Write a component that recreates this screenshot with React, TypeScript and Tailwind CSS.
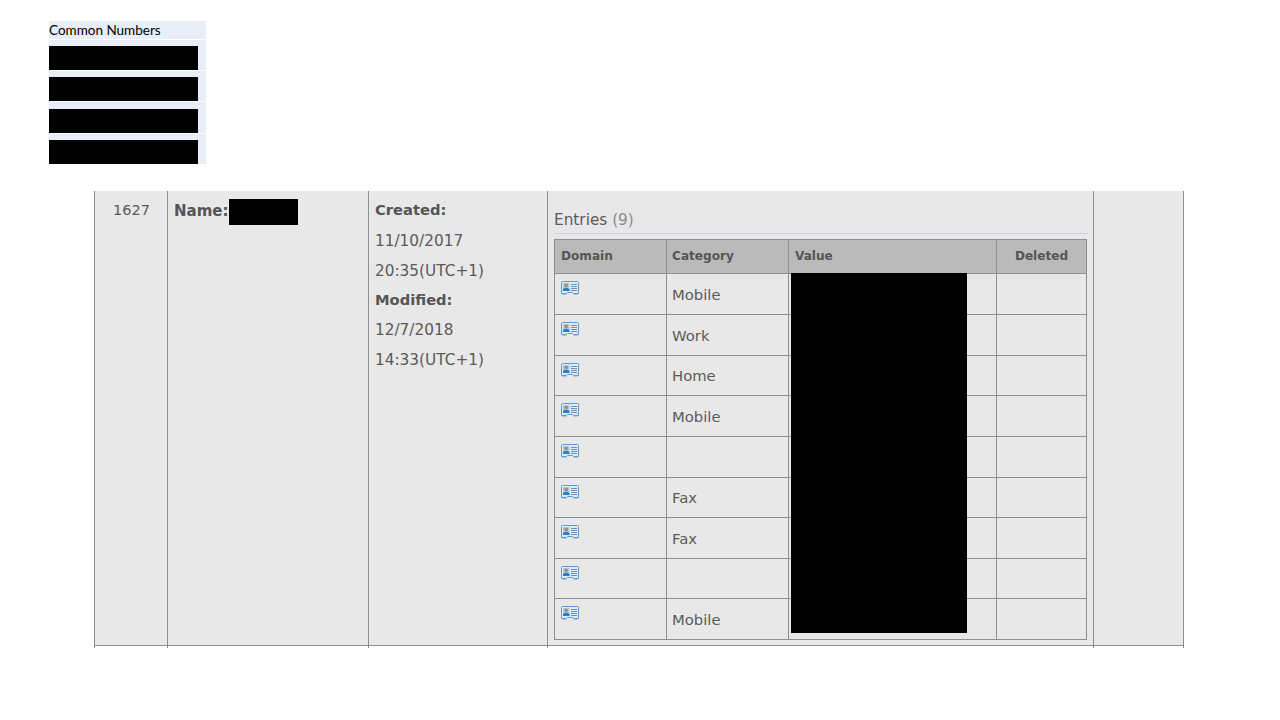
import React from "react";

function CardIcon() {
  return (
    <svg width="18" height="15" viewBox="0 0 18 15" className="block">
      <path d="M0.5 1.5 A1 1 0 0 1 1.5 .5 H16.5 A1 1 0 0 1 17.5 1.5 V12.5 H12.5 L11.5 11.5 H6.5 L5.5 12.5 H0.5 Z" fill="#dfecf8" stroke="#5b9bd5" />
      <rect x="2" y="2" width="6.5" height="8" fill="#a9cdea" />
      <circle cx="5.2" cy="4.3" r="1.9" fill="#c58450" />
      <path d="M2 10 V8 Q5.2 5.4 8.5 8 V10 Z" fill="#2f7cc0" />
      <path d="M10 3.5 H16 M10 5.5 H16 M10 7.5 H16 M10 9.5 H16" stroke="#6f8fae" strokeWidth="1" />
      <path d="M1.5 13.5 H5.5 M12.5 13.5 H16.5" stroke="#a9c3da" strokeWidth="1" />
    </svg>
  );
}

const entries = [
  { category: "Mobile", h: "h-[41px]" },
  { category: "Work", h: "h-[41px]" },
  { category: "Home", h: "h-[40px]" },
  { category: "Mobile", h: "h-[41px]" },
  { category: "", h: "h-[41px]" },
  { category: "Fax", h: "h-[40px]" },
  { category: "Fax", h: "h-[41px]" },
  { category: "", h: "h-[40px]" },
  { category: "Mobile", h: "h-[41px]" },
];

function Redacted({ tall }: { tall?: boolean }) {
  return (
    <div className={`mt-[1px] flex items-end bg-[#e9edf7] ${tall ? "h-[31px]" : "h-[30px]"}`}>
      <div className="h-6 w-[149px] bg-black" />
    </div>
  );
}

export default function App() {
  return (
    <div className="h-[720px] w-[1280px] overflow-hidden bg-white font-['DejaVu_Sans',sans-serif] text-[15.3px] text-[#5a5a5a]">
      <section className="ml-[49px] w-[157px] pt-[21px]">
        <div className="flex h-[18px] items-center bg-[#e9edf7] pt-[2px] font-['Lato',sans-serif] text-[13.5px] leading-none text-black">
          Common Numbers
        </div>
        <Redacted />
        <Redacted />
        <Redacted tall />
        <Redacted />
      </section>

      <section className="ml-[94px] mt-[27px] flex h-[457px] w-[1090px] items-start">
        <div className="h-full w-[73px] border-l border-[#8f8f8f]">
          <div className="h-[455px] border-b border-[#8f8f8f] bg-[#e8e8e8] pt-[10px] pl-[18px] text-[14.5px] leading-[19px]">1627</div>
        </div>
        <div className="h-full w-[201px] border-l border-[#8f8f8f]">
          <div className="flex h-[455px] items-start border-b border-[#8f8f8f] bg-[#e8e8e8] pt-[8px] pl-[6px]">
            <b className="mt-[3px] text-[15px] leading-[19px] text-[#555]">Name:</b>
            <span className="ml-[1px] h-[26px] w-[69px] bg-black" />
          </div>
        </div>
        <div className="h-full w-[179px] border-l border-[#8f8f8f]">
          <div className="h-[455px] border-b border-[#8f8f8f] bg-[#e8e8e8] pt-[7px] pl-[6px] leading-[29.8px]">
            <div className="text-[14.7px] leading-[24px] font-bold text-[#555]">Created:</div>
            <div className="mt-[4.8px]">11/10/2017</div>
            <div>20:35(UTC+1)</div>
            <div className="mt-[1.9px] text-[14.7px] leading-[24px] font-bold text-[#555]">Modified:</div>
            <div className="mt-[3.9px]">12/7/2018</div>
            <div>14:33(UTC+1)</div>
          </div>
        </div>
        <div className="h-full w-[546px] border-l border-[#8f8f8f]">
          <div className="h-[455px] border-b border-[#8f8f8f] bg-[#e8e8e8] pl-[6px] pt-[18px]">
            <div className="h-[25px] w-[534px] border-b border-[#c9d3e3] leading-[22px]">
              Entries <span className="text-[#8a8a8a]">(9)</span>
            </div>
            <div className="relative mt-[5px] w-[533px]">
              <table className="w-[533px] table-fixed border-collapse border border-[#8f8f8f] text-[14.8px]">
                <thead>
                  <tr className="h-[34px] bg-[#bababa] text-[12.1px] font-bold text-[#555]">
                    <th className="w-[112px] border border-[#8f8f8f] pl-[6px] text-left">Domain</th>
                    <th className="w-[122px] border border-[#8f8f8f] pl-[5px] text-left">Category</th>
                    <th className="w-[208px] border border-[#8f8f8f] pl-[6px] text-left">Value</th>
                    <th className="border border-[#8f8f8f] text-center">Deleted</th>
                  </tr>
                </thead>
                <tbody>
                  {entries.map((e, i) => (
                    <tr key={i} className={e.h}>
                      <td className="border border-[#8f8f8f] pl-[6px] align-top pt-[7px]">
                        <CardIcon />
                      </td>
                      <td className="border border-[#8f8f8f] pl-[5px] pt-[2px]">{e.category}</td>
                      <td className="border border-[#8f8f8f]" />
                      <td className="border border-[#8f8f8f]" />
                    </tr>
                  ))}
                </tbody>
              </table>
              <div className="absolute left-[237px] top-[34px] h-[360px] w-[176px] bg-black" />
            </div>
          </div>
        </div>
        <div className="h-full w-[91px] border-x border-[#8f8f8f]">
          <div className="h-[455px] border-b border-[#8f8f8f] bg-[#e8e8e8]" />
        </div>
      </section>
    </div>
  );
}
